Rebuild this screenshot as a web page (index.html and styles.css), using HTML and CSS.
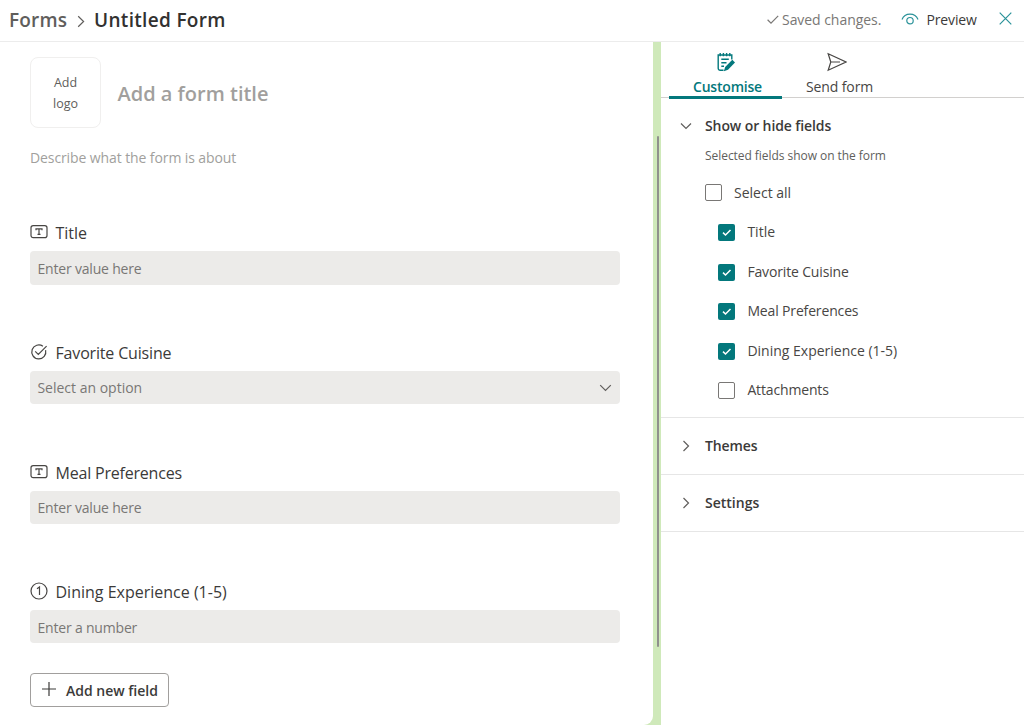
FILE: index.html
```html
<!DOCTYPE html>
<html lang="en">
<head>
<meta charset="utf-8">
<title>Untitled Form</title>
<link rel="stylesheet" href="styles.css">
</head>
<body>
<header class="topbar">
  <span class="crumb">Forms</span>
  <svg class="crumb-sep" width="8" height="13" viewBox="0 0 8 13"><path d="M1.2 1.2 6.6 6.5 1.2 11.8"/></svg>
  <h1 class="form-name">Untitled Form</h1>
  <span class="saved"><svg width="12" height="9" viewBox="0 0 12 9"><path d="M.6 4.8 4 8.1 11.2.8"/></svg><span class="saved-text">Saved changes.</span></span>
  <button class="preview"><svg width="18" height="13" viewBox="0 0 18 13"><path d="M1 6.5C3.8-.7 14.2-.7 17 6.5"/><circle cx="9" cy="7.7" r="3.2"/></svg><span class="preview-text">Preview</span></button>
  <button class="close" aria-label="Close"><svg width="13" height="13" viewBox="0 0 13 13"><path d="M.7.7 12.3 12.3M12.3.7.7 12.3"/></svg></button>
</header>
<div class="workspace">
  <main class="form">
    <div class="form-head">
      <div class="logo">Add<br>logo</div>
      <h2 class="form-title">Add a form title</h2>
    </div>
    <p class="desc"><span>Describe what the form is about</span></p>
    <section class="field">
      <div class="label"><svg class="ico" width="18" height="18" viewBox="0 0 18 18"><rect x="1" y="2.6" width="16" height="12" rx="2.2"/><path d="M6 7.2V5.8h6v1.4M9 5.8v5.6M7.5 11.4h3"/></svg><span>Title</span></div>
      <div class="input tall"><span>Enter value here</span></div>
    </section>
    <section class="field">
      <div class="label"><svg class="ico" width="18" height="18" viewBox="0 0 18 18"><path d="M12.9 3.2A7 7 0 1 0 15.6 7.2M5.2 8.4 8.3 11.5 16.6 3.2"/></svg><span class="l-cuisine">Favorite Cuisine</span></div>
      <div class="input"><span class="i-select">Select an option</span><svg class="drop" width="13" height="8" viewBox="0 0 13 8"><path d="M1.2 1.2 6.5 6.5 11.8 1.2"/></svg></div>
    </section>
    <section class="field">
      <div class="label"><svg class="ico" width="18" height="18" viewBox="0 0 18 18"><rect x="1" y="2.6" width="16" height="12" rx="2.2"/><path d="M6 7.2V5.8h6v1.4M9 5.8v5.6M7.5 11.4h3"/></svg><span class="l-meal">Meal Preferences</span></div>
      <div class="input"><span>Enter value here</span></div>
    </section>
    <section class="field last">
      <div class="label"><svg class="ico" width="18" height="18" viewBox="0 0 18 18"><circle cx="9" cy="9" r="8"/><path d="M7 6.8 9.5 5v8"/></svg><span>Dining Experience (1-5)</span></div>
      <div class="input"><span class="i-number">Enter a number</span></div>
    </section>
    <button class="add"><svg width="14" height="14" viewBox="0 0 14 14"><path d="M7 0v14M0 7h14"/></svg><span>Add new field</span></button>
  </main>
  <div class="rail"><div class="thumb"></div></div>
  <aside class="side">
    <nav class="tabs">
      <button class="tab active">
        <svg width="18" height="20" viewBox="0 0 18 20"><path d="M6.500 18.300H3.200A2 2 0 0 1 1.200 16.300V3H14.800V7.500M4.300 7.300H11.800M4.300 10.700H9.500M4.300 14.200H7"/><path d="M3.200 1V4.200M6.400 1V4.200M9.600 1V4.200M12.800 1V4.200"/><path class="solid" d="M15.300 7.800 18 10.500 11 17.700 6.800 19.200 8.200 15Z"/></svg>
        <span class="tab-text">Customise</span>
      </button>
      <button class="tab send">
        <svg width="20" height="20" viewBox="0 0 20 20"><path d="M1.200 1.800 19 10 1.200 18.200 3.800 10ZM3.800 10H13"/></svg>
        <span class="tab-text">Send form</span>
      </button>
    </nav>
    <section class="fields-panel">
      <h3 class="panel-title"><svg class="chev" width="12" height="12" viewBox="0 0 12 12"><path d="M1 3.500 6 8.500 11 3.500"/></svg><span class="t-show">Show or hide fields</span></h3>
      <p class="hint"><span>Selected fields show on the form</span></p>
      <div class="check all"><i class="box"></i><span>Select all</span></div>
      <div class="check"><i class="box on"><svg width="17" height="17" viewBox="0 0 17 17"><path d="M5 8.600 7.500 11 12.500 6"/></svg></i><span>Title</span></div>
      <div class="check"><i class="box on"><svg width="17" height="17" viewBox="0 0 17 17"><path d="M5 8.600 7.500 11 12.500 6"/></svg></i><span class="c-cuisine">Favorite Cuisine</span></div>
      <div class="check"><i class="box on"><svg width="17" height="17" viewBox="0 0 17 17"><path d="M5 8.600 7.500 11 12.500 6"/></svg></i><span class="c-meal">Meal Preferences</span></div>
      <div class="check"><i class="box on"><svg width="17" height="17" viewBox="0 0 17 17"><path d="M5 8.600 7.500 11 12.500 6"/></svg></i><span>Dining Experience (1-5)</span></div>
      <div class="check"><i class="box"></i><span class="c-attach">Attachments</span></div>
    </section>
    <h3 class="panel-title closed"><svg class="chev" width="12" height="12" viewBox="0 0 12 12"><path d="M3.500 1 8.500 6 3.500 11"/></svg><span class="t-themes">Themes</span></h3>
    <h3 class="panel-title closed"><svg class="chev" width="12" height="12" viewBox="0 0 12 12"><path d="M3.500 1 8.500 6 3.500 11"/></svg><span>Settings</span></h3>
  </aside>
</div>
</body>
</html>
```
FILE: styles.css
```css
* { box-sizing: border-box; }
body { margin: 0; height: 725px; overflow: hidden; display: flex; flex-direction: column; background: #fff; color: #484644; font-family: "Open Sans", "Noto Sans", sans-serif; font-size: 14px; }
h1, h2, h3, p { margin: 0; font-weight: 600; }
button { border: 0; background: none; padding: 0; margin: 0; font: inherit; color: inherit; }
span { white-space: nowrap; }
svg { fill: none; stroke: currentColor; stroke-width: 1.2; flex: none; }

.topbar { height: 42px; flex: none; display: flex; align-items: center; padding: 0 12px 2px 9px; border-bottom: 1px solid #ececec; }
.crumb { font-size: 19px; font-weight: 600; color: #605e5c; width: 68px; letter-spacing: 0.2px; }
.crumb-sep { margin-top: 3px; color: #605e5c; }
.form-name { font-size: 19px; color: #323130; margin-left: 9px; letter-spacing: 0.32px; }
.saved { margin-left: auto; display: flex; align-items: center; gap: 3px; color: #797775; width: 115px; letter-spacing: -0.05px; }
.preview { display: flex; align-items: center; gap: 7px; margin-left: 20px; width: 76px; color: #3b3a39; letter-spacing: -0.15px; }
.preview svg { color: #2a9299; margin: -1px 0 0 -1px; }
.preview-text { margin-left: 0.5px; }
.close { margin-left: 21px; height: 13px; display: flex; color: #2a9299; margin-top: -3px; }

.workspace { flex: 1; display: flex; background: #cfe9ba; min-height: 0; }
.form { width: 653px; padding: 15px 33px 0 30px; background: #fff; border-bottom-right-radius: 9px; }
.form-head { display: flex; align-items: center; gap: 17px; }
.logo { width: 71px; height: 71px; border: 1px solid #f0efee; border-radius: 8px; text-align: center; font-size: 12.5px; line-height: 21px; padding-top: 14px; color: #605e5c; }
.form-title { font-size: 20px; color: #a19f9d; margin: 1px 0 0 -0.5px; }
.desc { margin: 20px 0 43px; height: 20px; line-height: 20px; font-weight: 400; color: #a19f9d; letter-spacing: -0.1px; }
.field { height: 119.8px; display: flex; flex-direction: column; }
.field.last { height: 102.6px; }
.label { height: 34px; margin-bottom: 6px; display: flex; align-items: flex-start; gap: 8px; font-size: 16px; line-height: 24px; padding-top: 10px; color: #3b3a39; }
.label span { margin-left: -0.5px; }
.l-cuisine { letter-spacing: -0.17px; }
.l-meal { letter-spacing: -0.2px; }
.ico { color: #484644; margin-top: 2px; }
.input { height: 33px; width: 590px; border-radius: 4px; background: #ecebe9; display: flex; align-items: center; justify-content: space-between; padding: 1px 8px 0 7px; color: #797775; letter-spacing: -0.18px; }
.input.tall { height: 34px; }
.input .i-select { letter-spacing: 0; }
.input span { margin-left: 0.4px; }
.drop { color: #605e5c; }
.add { width: 139px; height: 34px; display: flex; align-items: center; gap: 10px; padding: 1px 0 0 11px; border: 1px solid #a19f9d; border-radius: 4px; font-weight: 600; color: #3b3a39; }
.add svg { margin-top: -2px; }

.rail { width: 8px; padding: 94px 0 0 4px; }
.thumb { width: 2px; height: 511px; border-radius: 1px; background: #8f918d; }

.side { flex: 1; background: #fff; }
.tabs { height: 56px; display: flex; padding-left: 8px; border-bottom: 1px solid #d2d0ce; }
.tab { height: 57px; display: flex; flex-direction: column; align-items: center; padding-top: 10px; line-height: 20px; }
.tab svg { height: 20px; }
.tab .tab-text { margin-top: 5px; }
.active { width: 113px; border-bottom: 3px solid #03787c; color: #03787c; font-weight: 600; letter-spacing: -0.2px; }
.active .tab-text { margin-left: 4px; }
.active svg { margin-left: 1px; stroke-width: 1.4; }
.tab .solid { fill: currentColor; stroke: none; }
.send { width: 113px; letter-spacing: -0.1px; }
.send .tab-text { margin-left: 2px; }
.send svg { margin-left: -3px; }

.fields-panel { height: 320px; padding-top: 18px; border-bottom: 1px solid #e6e6e6; }
.panel-title { display: flex; align-items: center; gap: 13px; padding-left: 19px; font-size: 14px; line-height: 20px; color: #3b3a39; }
.t-show, .t-themes { letter-spacing: -0.1px; }
.chev { color: #605e5c; }
.hint { margin: 11px 0 17px 44px; font-size: 12px; line-height: 18px; font-weight: 400; color: #605e5c; letter-spacing: -0.05px; }
.check { height: 39.5px; padding-left: 57px; display: flex; align-items: center; gap: 12px; color: #484644; }
.check span { margin: -2px 0 0 0.4px; }
.check.all { height: 20px; padding-left: 43px; margin-bottom: 11px; }
.check.all span { margin: 1px 0 0 0.5px; }
.c-cuisine, .c-meal, .c-attach { letter-spacing: -0.15px; }
.box { width: 17px; height: 17px; border: 1px solid #797775; border-radius: 2px; display: block; }
.check.all .box { margin-left: 0.5px; }
.box.on { background: #03787c; border: 0; color: #fff; }
.box.on svg { display: block; stroke-width: 1.5; }
.closed { height: 57px; border-bottom: 1px solid #e6e6e6; }
```
